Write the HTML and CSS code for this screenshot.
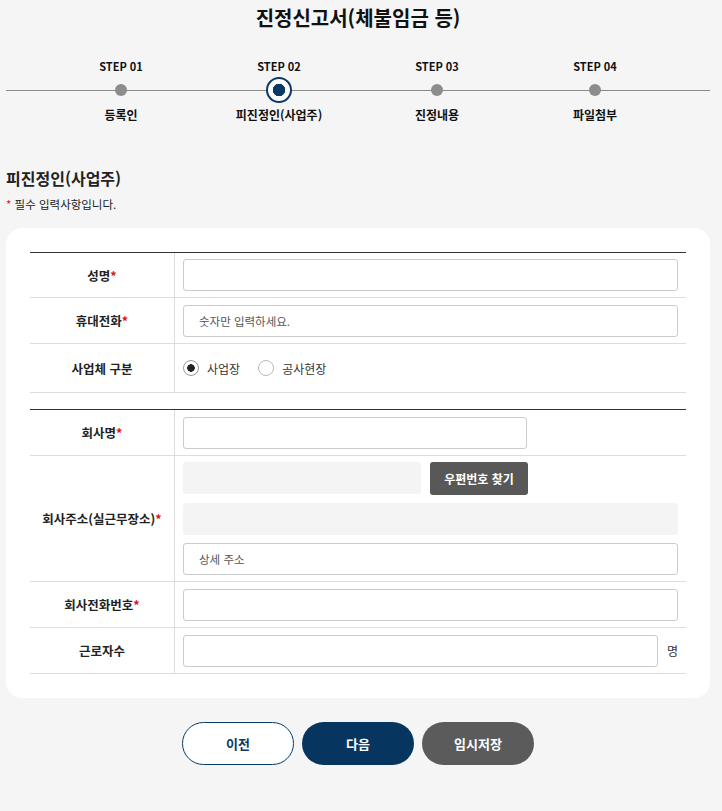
FILE: index.html
```html
<!DOCTYPE html>
<html lang="ko">
<head>
<meta charset="utf-8">
<title>진정신고서(체불임금 등)</title>
<link rel="stylesheet" href="styles.css">
</head>
<body>
<div class="wrap">
  <h1 class="title">진정신고서(체불임금 등)</h1>

  <ol class="steps">
    <li class="step"><span class="step-no">STEP 01</span><span class="dot-row"><span class="dot"></span></span><span class="step-name">등록인</span></li>
    <li class="step active"><span class="step-no">STEP 02</span><span class="dot-row"><span class="dot"></span></span><span class="step-name">피진정인(사업주)</span></li>
    <li class="step"><span class="step-no">STEP 03</span><span class="dot-row"><span class="dot"></span></span><span class="step-name">진정내용</span></li>
    <li class="step"><span class="step-no">STEP 04</span><span class="dot-row"><span class="dot"></span></span><span class="step-name">파일첨부</span></li>
  </ol>

  <h2 class="sec-title">피진정인(사업주)</h2>
  <p class="note"><span class="req">*</span> 필수 입력사항입니다.</p>

  <div class="card">
    <div class="tbl tbl1">
      <div class="row">
        <div class="lbl">성명<span class="req">*</span></div>
        <div class="val"><input class="inp" type="text"></div>
      </div>
      <div class="row">
        <div class="lbl">휴대전화<span class="req">*</span></div>
        <div class="val"><input class="inp" type="text" placeholder="숫자만 입력하세요."></div>
      </div>
      <div class="row row-radio">
        <div class="lbl">사업체 구분</div>
        <div class="val radios">
          <label class="radio"><span class="circle on"></span>사업장</label>
          <label class="radio"><span class="circle"></span>공사현장</label>
        </div>
      </div>
    </div>

    <div class="tbl tbl2">
      <div class="row">
        <div class="lbl">회사명<span class="req">*</span></div>
        <div class="val"><input class="inp inp-mid" type="text"></div>
      </div>
      <div class="row row-addr">
        <div class="lbl">회사주소(실근무장소)<span class="req">*</span></div>
        <div class="val addr">
          <div class="zip-line"><span class="gray zip"></span><button class="zip-btn" type="button">우편번호 찾기</button></div>
          <span class="gray full"></span>
          <input class="inp" type="text" placeholder="상세 주소">
        </div>
      </div>
      <div class="row">
        <div class="lbl">회사전화번호<span class="req">*</span></div>
        <div class="val"><input class="inp" type="text"></div>
      </div>
      <div class="row">
        <div class="lbl">근로자수</div>
        <div class="val unit-line"><input class="inp" type="text"><span class="unit">명</span></div>
      </div>
    </div>
  </div>

  <div class="btns">
    <button class="btn prev" type="button">이전</button>
    <button class="btn next" type="button">다음</button>
    <button class="btn save" type="button">임시저장</button>
  </div>
</div>
</body>
</html>
```

FILE: styles.css
```css
* { box-sizing: border-box; }
html, body { margin: 0; padding: 0; }
body {
  background: #f5f5f5;
  font-family: "Noto Sans CJK KR", "Noto Sans", sans-serif;
  color: #222;
}
.wrap {
  width: 704px;
  margin-left: 6px;
}
.title {
  margin: 0;
  padding-top: 6px;
  height: 55px;
  font-size: 20px;
  line-height: 24px;
  font-weight: 700;
  text-align: center;
  color: #111;
}
.steps {
  list-style: none;
  margin: 0;
  padding: 0 36px;
  display: flex;
  background: linear-gradient(#8a8a8a, #8a8a8a) no-repeat 0 34.5px / 100% 1px;
}
.step {
  width: 158px;
  display: flex;
  flex-direction: column;
  align-items: center;
}
.step-no {
  height: 22px;
  line-height: 22px;
  font-size: 11px;
  font-weight: 700;
  color: #111;
}
.dot-row {
  height: 26px;
  display: flex;
  align-items: center;
  justify-content: center;
}
.dot {
  width: 12px;
  height: 12px;
  border-radius: 50%;
  background: #8c8c8c;
}
.step.active .dot {
  width: 26px;
  height: 26px;
  background: #fff radial-gradient(circle, #0b3966 0 6px, transparent 6.5px);
  border: 2px solid #0b3966;
}
.step-name {
  height: 24px;
  line-height: 24px;
  font-size: 12px;
  font-weight: 700;
  color: #111;
}
.sec-title {
  margin: 40px 0 0;
  font-size: 16px;
  line-height: 22px;
  font-weight: 700;
  color: #222;
}
.note {
  margin: 6px 0 0;
  font-size: 11.5px;
  line-height: 18px;
  color: #222;
}
.req { color: #e0141e; }
.card {
  margin-top: 15px;
  background: #fff;
  border-radius: 16px;
  padding: 24px 24px 24px;
}
.tbl {
  border-top: 1px solid #333;
}
.tbl2 { margin-top: 16px; }
.row {
  display: flex;
  min-height: 46px;
  border-bottom: 1px solid #ddd;
}
.tbl1 .row:first-child { min-height: 45px; }
.tbl1 .row-radio { min-height: 49px; }
.row-addr { min-height: 126px; }
.lbl {
  width: 145px;
  flex: none;
  border-right: 1px solid #ddd;
  display: flex;
  align-items: center;
  justify-content: center;
  font-size: 12.5px;
  font-weight: 700;
  color: #222;
}
.val {
  flex: 1;
  padding: 0 8px;
  display: flex;
  align-items: center;
}
.inp {
  display: block;
  width: 100%;
  height: 32px;
  border: 1px solid #ccc;
  border-radius: 3px;
  padding: 0 15px;
  font-family: inherit;
  font-size: 11.5px;
  color: #222;
  background: #fff;
  outline: none;
}
.inp::placeholder { color: #555; }
.inp-mid { width: 344px; }
.radio {
  display: flex;
  align-items: center;
  font-size: 12px;
  color: #333;
  margin-right: 18px;
}
.circle {
  width: 16px;
  height: 16px;
  border: 1px solid #bbb;
  border-radius: 50%;
  margin-right: 8px;
  background: #fff;
}
.circle.on {
  border-color: #999;
  background: radial-gradient(circle, #222 0 3.5px, transparent 4px), #fff;
}
.addr {
  flex-direction: column;
  align-items: stretch;
  justify-content: flex-start;
  padding-top: 6px;
}
.zip-line {
  display: flex;
  gap: 9px;
  height: 32px;
}
.gray {
  display: block;
  height: 32px;
  background: #f4f4f4;
  border-radius: 3px;
}
.zip { width: 238px; }
.full { margin-top: 9px; }
.addr .inp { margin-top: 8px; }
.zip-btn {
  width: 98px;
  height: 33px;
  border: 0;
  border-radius: 3px;
  background: #585858;
  color: #fff;
  font-family: inherit;
  font-size: 12px;
  font-weight: 700;
  padding: 0;
}
.unit-line { gap: 9px; }
.unit {
  font-size: 12px;
  color: #333;
  width: 11px;
  flex: none;
}
.btns {
  display: flex;
  justify-content: center;
  gap: 8px;
  margin-top: 24px;
}
.btn {
  width: 112px;
  height: 43px;
  border-radius: 22px;
  font-family: inherit;
  font-size: 13px;
  font-weight: 700;
  border: 1px solid transparent;
  padding: 0;
}
.prev { background: #fff; border-color: #0b3966; color: #0b3966; }
.next { background: #06365f; color: #fff; }
.save { background: #5b5b5b; color: #fff; }
```
